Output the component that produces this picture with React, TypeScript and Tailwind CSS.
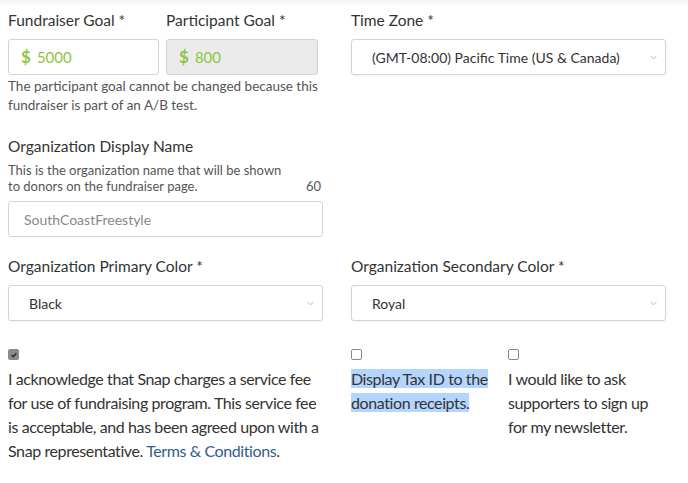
import { ChevronDown } from "lucide-react";

const font = { fontFamily: "Lato, 'Open Sans', sans-serif" };

function Select({ value }: { value: string }) {
  return (
    <div className="flex h-[36px] items-center justify-between rounded-[3px] border border-[#d4d4d4] bg-white pl-[20px] pr-[6px] shadow-[0_1px_2px_rgba(0,0,0,0.06)]">
      <span className="text-[14px] text-[#333]">{value}</span>
      <ChevronDown className="h-[11px] w-[11px] text-[#999]" strokeWidth={1.5} />
    </div>
  );
}

function Checkbox({ checked }: { checked?: boolean }) {
  return checked ? (
    <div className="flex h-[11px] w-[11px] items-center justify-center rounded-[2px] bg-[#8a8a8a]">
      <svg viewBox="0 0 10 10" className="h-[8px] w-[8px]" fill="none" stroke="#222" strokeWidth={1.6}>
        <path d="M2 5.2l2 2L8 2.8" />
      </svg>
    </div>
  ) : (
    <div className="h-[11px] w-[11px] rounded-[2px] border border-[#888] bg-white" />
  );
}

export default function App() {
  return (
    <div className="relative h-[483px] w-[688px] overflow-hidden bg-white text-[#333]" style={font}>
      <div className="h-[6px] bg-gradient-to-b from-[#f2f2f2] to-white" />
      <div className="grid grid-cols-[315px_315px] gap-x-[28px] px-[8px] pt-[4px]">
        <div>
          <div className="flex gap-[7px]">
            <div className="w-[151px]">
              <div className="text-[15.5px] leading-[20px]">Fundraiser Goal *</div>
              <div className="mt-[9px] flex h-[36px] items-center rounded-[3px] border border-[#d4d4d4] bg-white pl-[12px] text-[#8cc63f]">
                <span className="text-[17px] font-bold">$</span>
                <span className="ml-[6px] text-[15px]">5000</span>
              </div>
            </div>
            <div className="w-[152px]">
              <div className="text-[15.5px] leading-[20px]">Participant Goal *</div>
              <div className="mt-[9px] flex h-[36px] items-center rounded-[3px] border border-[#d4d4d4] bg-[#ebebeb] pl-[12px] text-[#8cc63f]">
                <span className="text-[17px] font-bold">$</span>
                <span className="ml-[6px] text-[15px]">800</span>
              </div>
            </div>
          </div>
          <p className="mt-[2px] text-[13.5px] leading-[19px] text-[#555]">
            The participant goal cannot be changed because this fundraiser is part of an A/B test.
          </p>
        </div>
        <div>
          <div className="text-[15.5px] leading-[20px]">Time Zone *</div>
          <div className="mt-[9px]">
            <Select value="(GMT-08:00) Pacific Time (US & Canada)" />
          </div>
        </div>

        <div className="mt-[21px]">
          <div className="text-[15.5px] leading-[20px]">Organization Display Name</div>
          <div className="mt-[6px] flex items-end justify-between text-[13px] leading-[16px] text-[#555]">
            <span className="w-[275px]">This is the organization name that will be shown to donors on the fundraiser page.</span>
            <span className="mr-[2px]">60</span>
          </div>
          <div className="mt-[7px] flex h-[36px] items-center rounded-[3px] border border-[#d4d4d4] bg-white pl-[15px] text-[14px] text-[#888]">
            SouthCoastFreestyle
          </div>
        </div>
        <div />

        <div className="mt-[19px]">
          <div className="text-[15.5px] leading-[20px]">Organization Primary Color *</div>
          <div className="mt-[9px]">
            <Select value="Black" />
          </div>
        </div>
        <div className="mt-[19px]">
          <div className="text-[15.5px] leading-[20px]">Organization Secondary Color *</div>
          <div className="mt-[9px]">
            <Select value="Royal" />
          </div>
        </div>

        <div className="mt-[28px]">
          <Checkbox checked />
          <p className="mt-[7px] text-[16px] leading-[24px] tracking-[-0.4px]">
            I acknowledge that Snap charges a service fee for use of fundraising program. This service fee is
            acceptable, and has been agreed upon with a Snap representative.{" "}
            <span className="text-[#2f5d8c]">Terms &amp; Conditions</span>.
          </p>
        </div>
        <div className="mt-[28px] flex gap-[7px]">
          <div className="w-[150px]">
            <Checkbox />
            <p className="mt-[7px] text-[16px] leading-[24px] tracking-[-0.4px]">
              <span className="bg-[#b4d5fe]">Display Tax ID to the donation receipts.</span>
            </p>
          </div>
          <div className="w-[150px]">
            <Checkbox />
            <p className="mt-[7px] text-[16px] leading-[24px] tracking-[-0.4px]">
              I would like to ask supporters to sign up for my newsletter.
            </p>
          </div>
        </div>
      </div>
    </div>
  );
}
